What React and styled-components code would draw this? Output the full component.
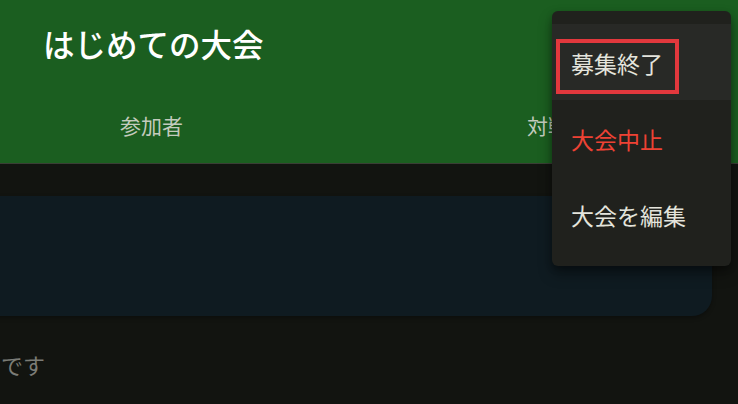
import React from "react";
import styled, { createGlobalStyle } from "styled-components";

const Global = createGlobalStyle`
  html, body { margin: 0; padding: 0; background: #121410; }
  body { font-family: "Noto Sans CJK JP", "Noto Sans", sans-serif; }
`;

const Page = styled.div`
  position: relative;
  width: 738px;
  height: 404px;
  overflow: hidden;
  background: #121410;
`;

const Header = styled.header`
  background: #1b5e20;
  border-bottom: 1px solid #3a3e35;
  display: flex;
  flex-direction: column;
`;

const Toolbar = styled.div`
  height: 86px;
  display: flex;
  align-items: center;
  padding-left: 43px;
`;

const Title = styled.h1`
  margin: 0;
  font-size: 31.5px;
  font-weight: 500;
  color: #ffffff;
  line-height: 1.3;
`;

const TabRow = styled.div`
  display: flex;
  height: 77px;
  margin-left: -52px;
`;

const Tab = styled.div`
  flex: 0 0 407px;
  display: flex;
  align-items: center;
  justify-content: center;
  font-size: 21px;
  color: #c3cbbd;
`;

const Main = styled.main`
  display: flex;
  flex-direction: column;
  padding-top: 32px;
`;

const Card = styled.div`
  margin-left: -20px;
  width: 732px;
  height: 120px;
  background: #0f1b21;
  border-radius: 20px;
  box-shadow: 0 2px 4px rgba(0, 0, 0, 0.3);
`;

const Note = styled.p`
  margin: 32px 0 0 1px;
  font-size: 22px;
  line-height: 1.5;
  color: #7b7c76;
`;

const Menu = styled.ul`
  position: absolute;
  top: 11px;
  left: 552px;
  width: 179px;
  margin: 0;
  padding: 13px 0 14px;
  list-style: none;
  background: #20211d;
  border-radius: 6px;
  box-shadow: 0 8px 14px rgba(0, 0, 0, 0.35), 0 3px 6px rgba(0, 0, 0, 0.25);
`;

const Item = styled.li`
  position: relative;
  height: 76px;
  box-sizing: border-box;
  padding: 2px 0 0 19px;
  display: flex;
  align-items: center;
  font-size: 23px;
  line-height: 1.5;
  color: ${(p) => (p.$danger ? "#ee4234" : "#e4e4dc")};
  background: ${(p) => (p.$active ? "#282926" : "transparent")};
`;

const Highlight = styled.span`
  position: absolute;
  left: 4px;
  top: 15px;
  width: 123px;
  height: 55px;
  box-sizing: border-box;
  border: 4px solid #e2383d;
`;

export default function App() {
  return (
    <>
      <Global />
      <Page>
        <Header>
          <Toolbar>
            <Title>はじめての大会</Title>
          </Toolbar>
          <TabRow>
            <Tab>参加者</Tab>
            <Tab>対戦表</Tab>
          </TabRow>
        </Header>
        <Main>
          <Card />
          <Note>です</Note>
        </Main>
        <Menu>
          <Item $active>
            募集終了
            <Highlight />
          </Item>
          <Item $danger>大会中止</Item>
          <Item>大会を編集</Item>
        </Menu>
      </Page>
    </>
  );
}
